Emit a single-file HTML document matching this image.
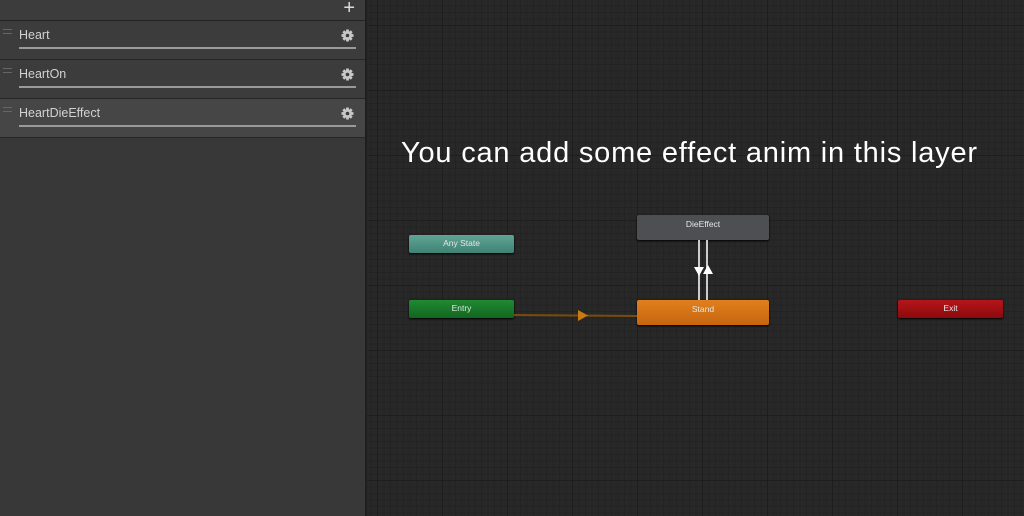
<!DOCTYPE html>
<html><head><style>
body{margin:0;width:1024px;height:516px;overflow:hidden;font-family:"Liberation Sans",sans-serif;position:relative;
background-color:#282828;
background-image:
linear-gradient(to right,#1e1e1e 0,#1e1e1e 1px,transparent 1px),
linear-gradient(to bottom,#1e1e1e 0,#1e1e1e 1px,transparent 1px),
linear-gradient(to right,#232323 0,#232323 1px,transparent 1px),
linear-gradient(to bottom,#232323 0,#232323 1px,transparent 1px);
background-size:65px 65px,65px 65px,6.5px 6.5px,6.5px 6.5px;
background-position:52px 0,0 25px,52px 0,0 25px;}
.panel{position:absolute;left:0;top:0;width:365px;height:516px;background:#383838;border-right:2px solid #1f1f1f}
.top{height:20px;background:#3c3c3c;border-bottom:1px solid #232323;position:relative}
.plus{position:absolute;right:10px;top:-3px;color:#ddd;font-size:20px}
.row{height:38px;background:#3c3c3c;border-bottom:1px solid #262626;position:relative}
.row.sel{background:#464646}
.row .n{position:absolute;left:19px;top:7px;color:#d2d2d2;font-size:12.5px}
.row .l{position:absolute;left:19px;right:9px;top:26px;height:2px;background:#9a9a9a}
.row .h{position:absolute;left:3px;top:8px;width:9px;height:3px;border-top:1px solid #666;border-bottom:1px solid #666}
.row .g{position:absolute;right:11px;top:8px}
.node{position:absolute;height:18px;border-radius:2px;color:#e6e6e6;font-size:8.5px;text-align:center;line-height:17px;box-shadow:0 1px 2px #000}
.title{position:absolute;left:401px;top:137px;color:#fff;font-size:29px;font-family:"Liberation Sans",sans-serif;letter-spacing:0.8px;white-space:nowrap}
</style></head><body>
<svg width="0" height="0" style="position:absolute"><defs><g id="gear"><circle cx="6.5" cy="6.5" r="4.5" fill="#c8c8c8"/><g stroke="#c8c8c8" stroke-width="2.8"><line x1="6.5" y1="0.5" x2="6.5" y2="12.5"/><line x1="0.5" y1="6.5" x2="12.5" y2="6.5"/><line x1="2.3" y1="2.3" x2="10.7" y2="10.7"/><line x1="10.7" y1="2.3" x2="2.3" y2="10.7"/></g><circle cx="6.5" cy="6.5" r="1.8" fill="#3c3c3c"/></g></defs></svg>
<div class="panel">
<div class="top"><span class="plus">+</span></div>
<div class="row"><div class="h"></div><div class="n">Heart</div><svg class="g" width="13" height="13"><use href="#gear"/></svg><div class="l"></div></div>
<div class="row"><div class="h"></div><div class="n">HeartOn</div><svg class="g" width="13" height="13"><use href="#gear"/></svg><div class="l"></div></div>
<div class="row sel"><div class="h"></div><div class="n">HeartDieEffect</div><svg class="g" width="13" height="13"><use href="#gear"/></svg><div class="l"></div></div>
</div>
<div class="title">You can add some effect anim in this layer</div>
<div class="node" style="left:409px;top:235px;width:105px;background:linear-gradient(#5fa596,#3f8273)">Any State</div>
<div class="node" style="left:409px;top:300px;width:105px;background:linear-gradient(#1f8a33,#12661f)">Entry</div>
<div class="node" style="left:637px;top:215px;width:132px;height:25px;line-height:18px;background:#4d4f53">DieEffect</div>
<div class="node" style="left:637px;top:300px;width:132px;height:25px;line-height:18px;background:linear-gradient(#e0801c,#c76510)">Stand</div>
<div class="node" style="left:898px;top:300px;width:105px;background:linear-gradient(#b4161a,#8c0a0c)">Exit</div>
<svg style="position:absolute;left:0;top:0" width="1024" height="516">
<line x1="514" y1="315" x2="637" y2="316" stroke="#7a4c0a" stroke-width="2"/>
<polygon points="578,310 588,315.5 578,321" fill="#c87a10"/>
<line x1="699" y1="240" x2="699" y2="300" stroke="#ccc" stroke-width="2"/>
<line x1="707" y1="240" x2="707" y2="300" stroke="#ccc" stroke-width="2"/>
<polygon points="694,267 704,267 699,276" fill="#fff"/>
<polygon points="703,274 713,274 708,265" fill="#fff"/>
</svg>
</body></html>
